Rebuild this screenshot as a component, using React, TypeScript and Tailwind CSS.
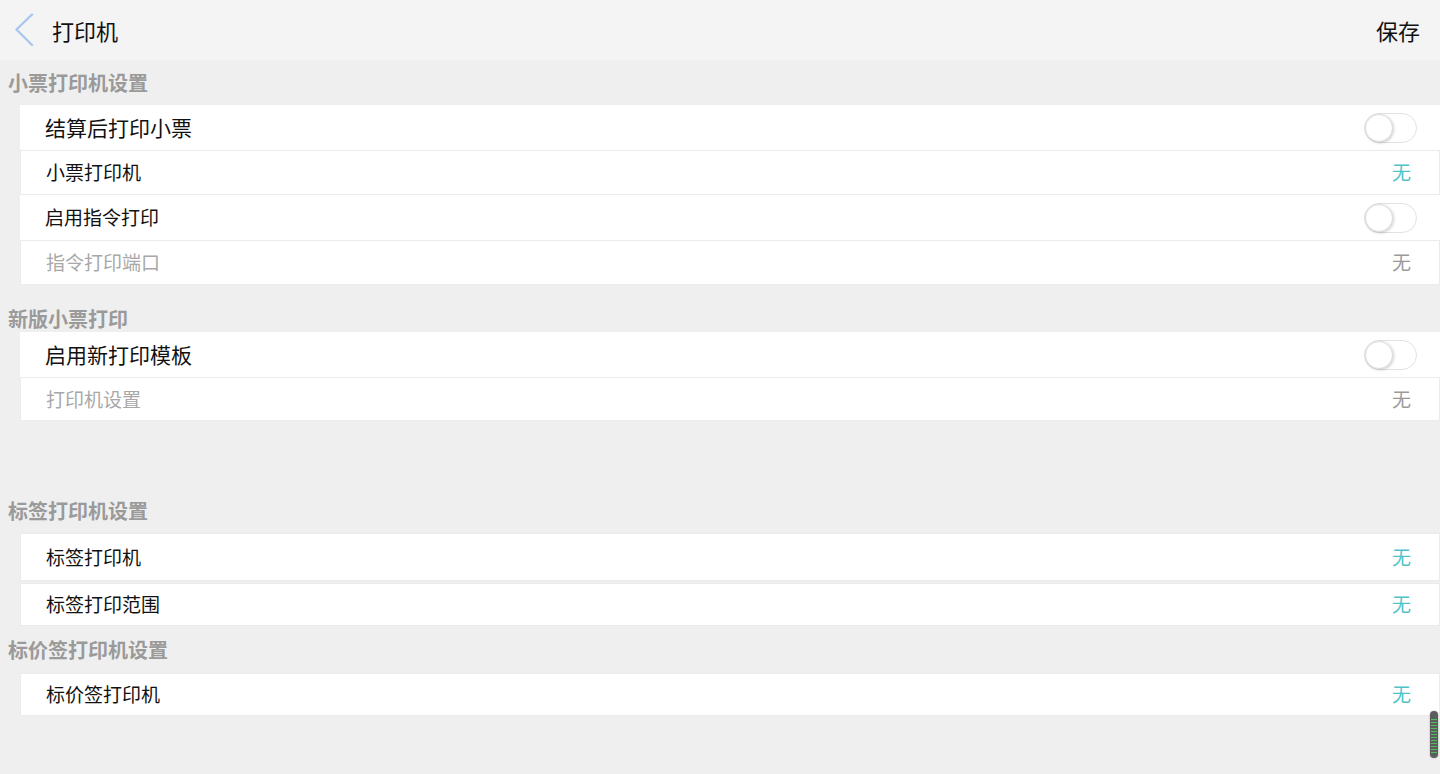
import React from "react";

const font = { fontFamily: '"Microsoft YaHei", "Noto Sans CJK SC", "Noto Sans", sans-serif' };

function Toggle() {
  return (
    <div className="w-[53px] h-[30px] rounded-full border border-[#e2e2e2] bg-white relative">
      <div className="absolute left-0 top-0 w-[28px] h-[28px] rounded-full bg-white border border-[#ddd] shadow-[1px_1px_3px_rgba(0,0,0,0.18)]" />
    </div>
  );
}

function Row({
  label,
  big,
  muted,
  right,
  h,
  bordered,
}: {
  label: string;
  big?: boolean;
  muted?: boolean;
  right: "toggle" | "teal" | "gray";
  h: string;
  bordered?: boolean;
}) {
  return (
    <div
      className={
        "ml-[20px] bg-white flex items-center justify-between pl-[25px] " +
        h +
        (bordered ? " border border-[#ebebeb]" : "") +
        (right === "toggle" ? " pr-[23px]" : " pr-[28px]")
      }
    >
      <span
        className={
          (big ? "text-[21px] " : "text-[19px] ") +
          (muted ? "text-[#a8a8a8]" : "text-[#111]")
        }
      >
        {label}
      </span>
      {right === "toggle" ? (
        <Toggle />
      ) : (
        <span className={"text-[19px] " + (right === "teal" ? "text-[#4cc3c9]" : "text-[#9a9a9a]")}>无</span>
      )}
    </div>
  );
}

function Title({ text, h, pb }: { text: string; h: string; pb: string }) {
  return (
    <div className={"flex items-end pl-[8px] " + h + " " + pb}>
      <span className="text-[20px] leading-[26px] font-bold text-[#9a9a9a]">{text}</span>
    </div>
  );
}

export default function App() {
  return (
    <div className="w-[1440px] h-[774px] bg-[#efefef] relative overflow-hidden" style={font}>
      <div className="h-[60px] bg-[#f4f4f4] flex items-center justify-between pl-[14px] pr-[20px]">
        <div className="flex items-center">
          <svg width="20" height="34" viewBox="0 0 20 34" className="mr-[18px]">
            <polyline points="18,1.5 2.5,16.5 18,32" fill="none" stroke="#a9c7ee" strokeWidth="2.4" strokeLinecap="round" strokeLinejoin="round" />
          </svg>
          <span className="text-[22px] text-[#111]">打印机</span>
        </div>
        <span className="text-[22px] text-[#111]">保存</span>
      </div>

      <Title text="小票打印机设置" h="h-[45px]" pb="pb-[9px]" />
      <Row label="结算后打印小票" big right="toggle" h="h-[45px]" />
      <Row label="小票打印机" right="teal" h="h-[45px]" bordered />
      <Row label="启用指令打印" right="toggle" h="h-[45px]" />
      <Row label="指令打印端口" muted right="gray" h="h-[45px]" bordered />

      <Title text="新版小票打印" h="h-[47px]" pb="pb-[0px]" />
      <Row label="启用新打印模板" big right="toggle" h="h-[45px]" />
      <Row label="打印机设置" muted right="gray" h="h-[44px]" bordered />

      <Title text="标签打印机设置" h="h-[112px]" pb="pb-[9px]" />
      <Row label="标签打印机" right="teal" h="h-[48px]" bordered />
      <div className="h-[2px]" />
      <Row label="标签打印范围" right="teal" h="h-[43px]" bordered />

      <Title text="标价签打印机设置" h="h-[47px]" pb="pb-[10px]" />
      <Row label="标价签打印机" right="teal" h="h-[43px]" bordered />

      <div className="absolute right-[2px] top-[711px] w-[8px] h-[47px] rounded-full bg-[#5c5c5c] flex flex-col items-center pt-[8px] gap-[2px] shadow-[0_0_2px_rgba(0,0,0,0.3)]">
        {Array.from({ length: 12 }).map((_, i) => (
          <div key={i} className="w-[6px] h-[1px] bg-[#4cbf5a]" />
        ))}
      </div>
    </div>
  );
}
